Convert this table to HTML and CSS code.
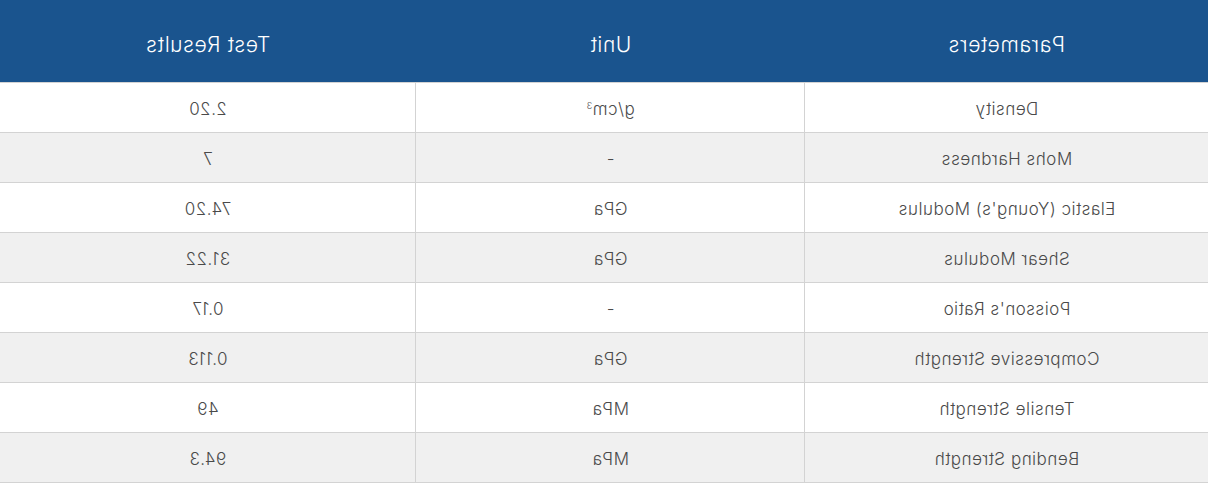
FILE: index.html
```html
<!DOCTYPE html>
<html lang="en">
<head>
<meta charset="utf-8">
<title>Properties</title>
<link rel="stylesheet" href="styles.css">
</head>
<body>
<table class="props">
  <thead>
    <tr>
      <th class="c-param">Parameters</th>
      <th class="c-unit">Unit</th>
      <th class="c-res">Test Results</th>
    </tr>
  </thead>
  <tbody>
    <tr><td>Density</td><td>g/cm<sup>3</sup></td><td>2.20</td></tr>
    <tr><td>Mohs Hardness</td><td>-</td><td>7</td></tr>
    <tr><td>Elastic (Young's) Modulus</td><td>GPa</td><td>74.20</td></tr>
    <tr><td>Shear Modulus</td><td>GPa</td><td>31.22</td></tr>
    <tr><td>Poisson's Ratio</td><td>-</td><td>0.17</td></tr>
    <tr><td>Compressive Strength</td><td>GPa</td><td>0.113</td></tr>
    <tr><td>Tensile Strength</td><td>MPa</td><td>49</td></tr>
    <tr><td>Bending Strength</td><td>MPa</td><td>94.3</td></tr>
  </tbody>
</table>
</body>
</html>
```
FILE: styles.css
```css
html, body {
  margin: 0;
  padding: 0;
  background: #ffffff;
}
body {
  font-family: Inter, "Liberation Sans", sans-serif;
}
.props {
  width: 1208px;
  border-collapse: collapse;
  table-layout: fixed;
  transform: scaleX(-1);
}
.props th {
  background: #1a548e;
  color: #ffffff;
  font-weight: 300;
  font-size: 21px;
  letter-spacing: 0.6px;
  height: 76px;
  padding: 6px 0 0;
  text-align: center;
  border-bottom: 1px solid #d3d3d3;
}
.c-param { width: 403px; }
.c-unit { width: 389px; }
.c-res { width: auto; }
.props td {
  height: 47px;
  padding: 2px 0 0;
  text-align: center;
  font-size: 17px;
  font-weight: 300;
  letter-spacing: 0.5px;
  color: #4a4a4a;
  border-bottom: 1px solid #d3d3d3;
  border-left: 1px solid #d3d3d3;
}
.props td:first-child {
  border-left: none;
}
.props tbody tr:nth-child(even) td {
  background: #f0f0f0;
}
.props sup {
  font-size: 9px;
  vertical-align: 6px;
  line-height: 0;
}
```
